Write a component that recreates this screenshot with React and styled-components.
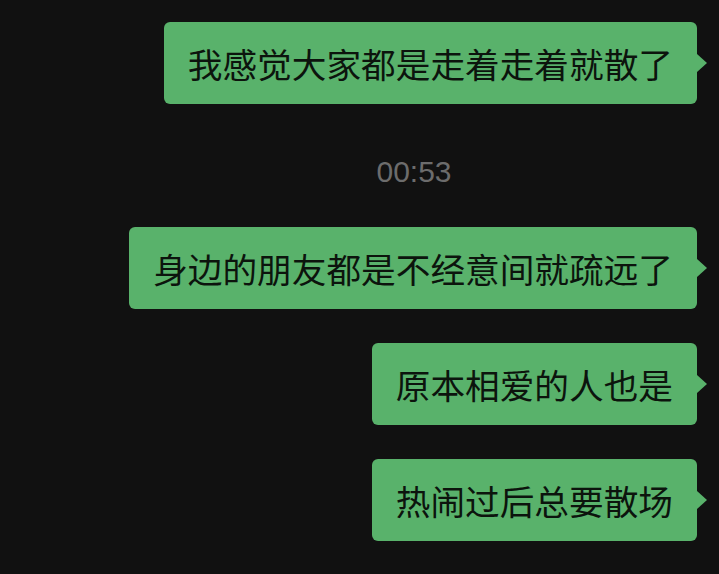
import React from 'react';
import styled, { createGlobalStyle } from 'styled-components';

const GlobalStyle = createGlobalStyle`
  html, body {
    margin: 0;
    padding: 0;
    background: #111111;
  }
  body {
    font-family: "Noto Sans CJK SC", "Noto Sans", sans-serif;
  }
`;

const ChatWindow = styled.div`
  width: 719px;
  height: 574px;
  overflow: hidden;
  background: #111111;
  box-sizing: border-box;
  padding: 22px 22px 0 0;
  display: flex;
  flex-direction: column;
  align-items: flex-end;
`;

const Bubble = styled.div`
  position: relative;
  background: #59b26b;
  color: #0c140d;
  border-radius: 6px;
  font-size: 34.67px;
  line-height: 44px;
  padding: 19px 24px 19px 24px;
  margin-bottom: ${props => props.gap || 34}px;
  white-space: nowrap;

  &::after {
    content: '';
    position: absolute;
    right: -10px;
    top: 50%;
    margin-top: -9px;
    width: 0;
    height: 0;
    border-left: 10px solid #59b26b;
    border-top: 9px solid transparent;
    border-bottom: 9px solid transparent;
  }
`;

const Timestamp = styled.div`
  align-self: stretch;
  padding-left: 131px;
  text-align: center;
  font-family: "Liberation Sans", Arial, sans-serif;
  font-size: 30px;
  line-height: 30px;
  color: #6c6c6c;
  margin-bottom: 40px;
`;

const messages = [
  { text: '我感觉大家都是走着走着就散了', gap: 53 },
  { time: '00:53' },
  { text: '身边的朋友都是不经意间就疏远了' },
  { text: '原本相爱的人也是' },
  { text: '热闹过后总要散场' },
];

export default function App() {
  return (
    <>
      <GlobalStyle />
      <ChatWindow>
        {messages.map((m, i) =>
          m.time ? (
            <Timestamp key={i}>{m.time}</Timestamp>
          ) : (
            <Bubble key={i} gap={m.gap}>{m.text}</Bubble>
          )
        )}
      </ChatWindow>
    </>
  );
}
